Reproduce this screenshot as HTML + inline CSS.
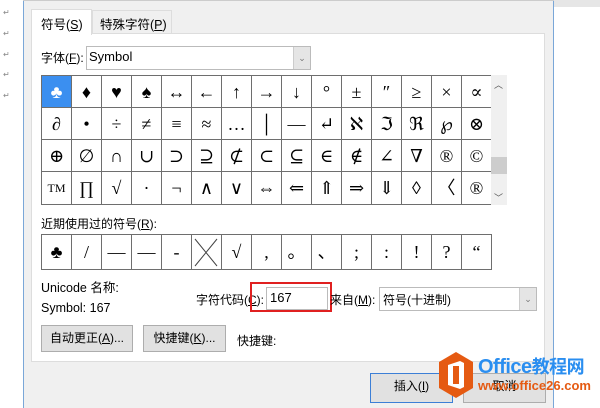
<!DOCTYPE html><html><head><meta charset="utf-8"><style>
*{margin:0;padding:0;box-sizing:border-box}
body{width:600px;height:400px;position:relative;overflow:hidden;background:#fff;font-family:"Liberation Sans","Noto Sans CJK SC",sans-serif;font-size:12px;color:#000}
.a{position:absolute}
.dlg{left:23px;top:-2px;width:531px;height:410px;background:#f0f0f0;border-left:1px solid #7aa7d8;border-right:1px solid #7aa7d8}
.grid{border-collapse:collapse;position:absolute;background:#fff;table-layout:fixed}
.grid td{border:1px solid #6e6e6e;width:30px;text-align:center;font-family:"Liberation Serif","DejaVu Serif",serif;font-size:18px;padding:0;overflow:hidden;line-height:20px}
.btn{position:absolute;background:#e1e1e1;border:1px solid #adadad;text-align:center;line-height:25px;font-size:12px}
.ret{position:absolute;left:3px;font-size:8px;color:#888}
</style></head><body>
<div class="ret" style="top:8px">↵</div><div class="ret" style="top:29px">↵</div><div class="ret" style="top:50px">↵</div><div class="ret" style="top:70px">↵</div><div class="ret" style="top:91px">↵</div>
<div class="a" style="left:554px;top:0;width:46px;height:7px;background:#e6e6e6"></div>
<div class="a dlg"></div>
<div class="a" style="left:23px;top:0;width:531px;height:1px;background:#ccc"></div>
<div class="a" style="left:31px;top:33px;width:514px;height:329px;background:#fff;border:1px solid #ddd"></div>
<div class="a" style="left:31px;top:9px;width:61px;height:26px;background:#fff;border:1px solid #ddd;border-bottom:none;padding:4px 0 0 9px;font-size:12.5px">符号(<u>S</u>)</div>
<div class="a" style="left:92px;top:10px;width:80px;height:23px;background:#f0f0f0;border:1px solid #ddd;border-bottom:none;padding:3px 0 0 7px;font-size:12.5px">特殊字符(<u>P</u>)</div>
<div class="a" style="left:41px;top:49px">字体(<u>F</u>):</div>
<div class="a" style="left:86px;top:46px;width:225px;height:24px;border:1px solid #bbb;background:#fff;padding:2px 0 0 2px;font-size:13px">Symbol</div>
<div class="a" style="left:293px;top:47px;width:17px;height:22px;background:#e5e5e5;border-left:1px solid #ccc;color:#777;font-size:9px;text-align:center;line-height:22px">⌄</div>
<table class="grid" style="left:41px;top:75px">
<tr style="height:32px"><td style="background:#3b8ff0;color:#fff">♣</td><td>♦</td><td>♥</td><td>♠</td><td>↔</td><td>←</td><td>↑</td><td>→</td><td>↓</td><td>°</td><td>±</td><td>″</td><td>≥</td><td>×</td><td>∝</td></tr>
<tr style="height:32px"><td>∂</td><td>•</td><td>÷</td><td>≠</td><td>≡</td><td>≈</td><td>…</td><td>│</td><td>—</td><td>↵</td><td>ℵ</td><td>ℑ</td><td>ℜ</td><td>℘</td><td>⊗</td></tr>
<tr style="height:32px"><td>⊕</td><td>∅</td><td>∩</td><td>∪</td><td>⊃</td><td>⊇</td><td>⊄</td><td>⊂</td><td>⊆</td><td>∈</td><td>∉</td><td>∠</td><td>∇</td><td>®</td><td>©</td></tr>
<tr style="height:33px"><td style="font-size:12px">TM</td><td>∏</td><td>√</td><td>·</td><td>¬</td><td>∧</td><td>∨</td><td>⇔</td><td>⇐</td><td>⇑</td><td>⇒</td><td>⇓</td><td>◊</td><td>〈</td><td>®</td></tr>
</table>
<div class="a" style="left:491px;top:75px;width:16px;height:130px;background:#f0f0f0"></div>
<div class="a" style="left:491px;top:157px;width:16px;height:17px;background:#cdcdcd"></div>
<div class="a" style="left:494px;top:78px;font-size:9px;color:#555">︿</div>
<div class="a" style="left:494px;top:191px;font-size:9px;color:#555">﹀</div>
<div class="a" style="left:41px;top:215px">近期使用过的符号(<u>R</u>):</div>
<table class="grid" style="left:41px;top:234px">
<tr style="height:35px"><td>♣</td><td>/</td><td>—</td><td>—</td><td>-</td><td><svg width="28" height="33" viewBox="0 0 28 33" style="display:block"><path d="M3 3L25 30M25 3L3 30" stroke="#444" stroke-width="1"/></svg></td><td>√</td><td>,</td><td>。</td><td>、</td><td>;</td><td>:</td><td>!</td><td>?</td><td>“</td></tr>
</table>
<div class="a" style="left:41px;top:277px;font-size:12.5px">Unicode 名称:</div>
<div class="a" style="left:41px;top:301px;font-size:12.5px">Symbol: 167</div>
<div class="a" style="left:196px;top:291px">字符代码(<u>C</u>):</div>
<div class="a" style="left:266px;top:287px;width:62px;height:23px;border:1px solid #bbb;background:#fff;padding:2px 0 0 3px;font-size:13px">167</div>
<div class="a" style="left:250px;top:282px;width:82px;height:30px;border:2px solid #e02020"></div>
<div class="a" style="left:330px;top:291px">来自(<u>M</u>):</div>
<div class="a" style="left:379px;top:287px;width:158px;height:24px;border:1px solid #bbb;background:#fff;padding:3px 0 0 3px">符号(十进制)</div>
<div class="a" style="left:519px;top:288px;width:17px;height:22px;background:#e5e5e5;border-left:1px solid #ccc;color:#777;font-size:9px;text-align:center;line-height:22px">⌄</div>
<div class="btn" style="left:41px;top:325px;width:92px;height:27px">自动更正(<u>A</u>)...</div>
<div class="btn" style="left:143px;top:325px;width:83px;height:27px">快捷键(<u>K</u>)...</div>
<div class="a" style="left:237px;top:332px">快捷键:</div>
<div class="btn" style="left:370px;top:373px;width:83px;height:30px;border:1px solid #3c7fd6">插入(<u>I</u>)</div>
<div class="btn" style="left:463px;top:373px;width:83px;height:30px">取消</div>
<svg class="a" style="left:438px;top:351px" width="36" height="48" viewBox="0 0 36 48"><polygon points="18,1 35,11 35,37 18,47 1,37 1,11" fill="#e55a12"/><path d="M10 14 L22 10 L26 12 L26 36 L22 38 L10 34 Z" fill="#fff"/><rect x="15" y="15" width="6" height="18" fill="#e55a12"/></svg>
<div class="a" style="left:478px;top:353px;font-size:20px;font-weight:bold;color:#2a8ef0;letter-spacing:-0.5px;white-space:nowrap">Office<span style="font-family:'Noto Sans CJK SC',sans-serif;font-size:18px">教程网</span></div>
<div class="a" style="left:478px;top:378px;font-size:13px;font-weight:bold;color:#e55a12;white-space:nowrap">www.office26.com</div>
</body></html>
